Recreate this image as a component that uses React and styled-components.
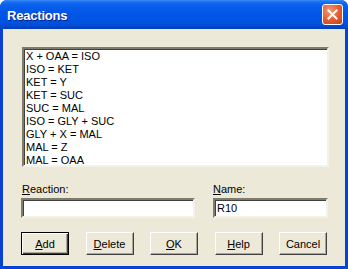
import React from "react";
import styled, { createGlobalStyle, css } from "styled-components";

const Global = createGlobalStyle`
  html, body { margin: 0; padding: 0; background: #ffffff; }
  body { font-family: "Liberation Sans", Arial, sans-serif; }
`;

const Window = styled.div`
  width: 348px;
  height: 269px;
  box-sizing: border-box;
  display: flex;
  flex-direction: column;
  border-radius: 7px 7px 0 0;
  overflow: hidden;
  background: #0842d2;
`;

const TitleBar = styled.div`
  height: 29px;
  flex: none;
  display: flex;
  align-items: center;
  justify-content: space-between;
  padding: 0 5px 0 7px;
  background: linear-gradient(
    to bottom,
    #3a8cf8 0px,
    #1a6ff0 2px,
    #0860ec 5px,
    #0357e6 12px,
    #0054e3 20px,
    #0050dc 24px,
    #0046c8 27px,
    #003fb8 29px
  );
`;

const Title = styled.span`
  color: #ffffff;
  font-family: "Liberation Sans", Arial, sans-serif;
  font-weight: bold;
  font-size: 13px;
  letter-spacing: -0.2px;
  text-shadow: 1px 1px 0 #0a1f8a;
  margin-top: 1px;
`;

const CloseButton = styled.div`
  width: 21px;
  height: 21px;
  box-sizing: border-box;
  border: 1px solid #ffffff;
  border-radius: 3px;
  background: radial-gradient(circle at 35% 30%, #f29a78 0%, #e25a2e 55%, #c8401a 100%);
  display: flex;
  align-items: center;
  justify-content: center;
`;

const Body = styled.div`
  flex: 1;
  margin: 0 3px 3px 3px;
  background: #ece9d8;
  padding: 18px 17px 0 18px;
  display: flex;
  flex-direction: column;
`;

const sunken = css`
  box-sizing: border-box;
  background: #ffffff;
  border-style: solid;
  border-width: 2px;
  border-color: #7f7c6e #f4f2e8 #f4f2e8 #7f7c6e;
  box-shadow: inset 1px 1px 0 #404040;
`;

const ListBox = styled.div`
  ${sunken};
  margin-left: 1px;
  width: 307px;
  height: 120px;
  padding: 1px 0 0 2px;
  display: flex;
  flex-direction: column;
`;

const ListItem = styled.div`
  height: 13px;
  line-height: 13px;
  font-size: 11px;
  color: #000000;
  white-space: nowrap;
`;

const FieldsRow = styled.div`
  display: flex;
  justify-content: space-between;
  margin-top: 16px;
`;

const Field = styled.div`
  display: flex;
  flex-direction: column;
  width: ${(p) => p.$w}px;
`;

const Label = styled.label`
  font-size: 11px;
  line-height: 13px;
  color: #000000;
  padding-left: ${(p) => p.$pad || 0}px;
  margin-bottom: 2px;
  u { text-decoration: underline; }
`;

const Input = styled.div`
  ${sunken};
  height: 20px;
  font-size: 11px;
  line-height: 16px;
  padding-left: 2px;
  color: #000000;
`;

const ButtonRow = styled.div`
  display: flex;
  justify-content: space-between;
  margin-top: 14px;
  padding-right: 1px;
`;

const Button = styled.div`
  width: 48px;
  height: 23px;
  box-sizing: border-box;
  background: #ece9d8;
  font-size: 11px;
  color: #000000;
  display: flex;
  align-items: center;
  justify-content: center;
  border-style: solid;
  border-width: 1px;
  border-color: #ffffff #404040 #404040 #ffffff;
  box-shadow: inset -1px -1px 0 #aca899;
  ${(p) =>
    p.$default &&
    css`
      border: 1px solid #000000;
      box-shadow: inset 1px 1px 0 #ffffff, inset -1px -1px 0 #404040,
        inset -2px -2px 0 #aca899;
    `}
  u { text-decoration: underline; }
`;

const reactions = [
  "X + OAA = ISO",
  "ISO = KET",
  "KET = Y",
  "KET = SUC",
  "SUC = MAL",
  "ISO = GLY + SUC",
  "GLY + X = MAL",
  "MAL = Z",
  "MAL = OAA",
];

export default function App() {
  return (
    <>
      <Global />
      <Window>
        <TitleBar>
          <Title>Reactions</Title>
          <CloseButton>
            <svg width="11" height="11" viewBox="0 0 11 11">
              <path d="M1.5 1.5 L9.5 9.5 M9.5 1.5 L1.5 9.5" stroke="#ffffff" strokeWidth="2" strokeLinecap="square" />
            </svg>
          </CloseButton>
        </TitleBar>
        <Body>
          <ListBox>
            {reactions.map((r) => (
              <ListItem key={r}>{r}</ListItem>
            ))}
          </ListBox>
          <FieldsRow>
            <Field $w={174}>
              <Label $pad={1}>
                <u>R</u>eaction:
              </Label>
              <Input />
            </Field>
            <Field $w={115}>
              <Label>
                <u>N</u>ame:
              </Label>
              <Input>R10</Input>
            </Field>
          </FieldsRow>
          <ButtonRow>
            <Button $default>
              <span>
                <u>A</u>dd
              </span>
            </Button>
            <Button>
              <span>
                <u>D</u>elete
              </span>
            </Button>
            <Button>
              <span>
                <u>O</u>K
              </span>
            </Button>
            <Button>
              <span>
                <u>H</u>elp
              </span>
            </Button>
            <Button>Cancel</Button>
          </ButtonRow>
        </Body>
      </Window>
    </>
  );
}
